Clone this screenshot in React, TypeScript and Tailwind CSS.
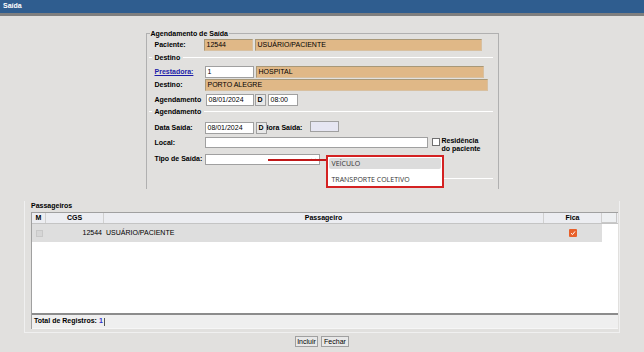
import React from "react";

const BG = "bg-[#e1e0de]";

function Inp({ w, v, tan, h = "h-[12px]", extra = "" }: { w: string; v?: string; tan?: boolean; h?: string; extra?: string }) {
  return (
    <div
      className={`${w} ${h} shrink-0 border ${tan ? "bg-[#e0b887] border-t-[#a89878] border-l-[#a89878] border-r-[#d8c0a0] border-b-[#d8c0a0]" : "bg-white border-[#a0a0a0]"} px-[2px] leading-[10px] text-[7px] whitespace-nowrap overflow-hidden ${extra}`}
    >
      {v}
    </div>
  );
}

function DBtn() {
  return (
    <div className="relative z-10 w-[11px] h-[12px] shrink-0 border border-[#a0a0a0] bg-[#e8e8e8] text-center font-bold leading-[10px] text-[7px]">
      D
    </div>
  );
}

function SubLegend({ t }: { t: string }) {
  return (
    <div className="flex h-[9px] items-center ml-[2px] mr-[5px]">
      <div className="w-[3px] h-px bg-white" />
      <span className="px-[3px] font-bold leading-[9px]">{t}</span>
      <div className="flex-1 h-px bg-white" />
    </div>
  );
}

export default function App() {
  return (
    <div className={`w-[644px] h-[352px] ${BG} font-['Liberation_Sans',Arial,sans-serif] text-[7px] text-black overflow-hidden`}>
      <div className="h-[13px] bg-[#2f5d8f] text-white font-bold px-[3px] leading-[12px] text-[7px]">Saída</div>
      <div className="h-[3px] bg-[#7f7f7f]" />

      {/* Top fieldset */}
      <div className="relative mt-[17px] mx-auto w-[353px] h-[156px] border-t border-l border-r border-[#b0b0b0]">
        <div className={`-mt-[5px] ml-[3px] w-fit px-[1px] ${BG} font-bold h-[9px] leading-[9px]`}>Agendamento de Saída</div>

        <div className="mt-[1px] flex h-[12px] items-center pl-[8px]">
          <span className="w-[49px] font-bold">Paciente:</span>
          <Inp w="w-[49px]" v="12544" tan />
          <Inp w="w-[227px]" v="USUÁRIO/PACIENTE" tan extra="ml-[2px]" />
        </div>

        <div className="mt-[2px]">
          <SubLegend t="Destino" />
        </div>

        <div className="mt-[4px] flex h-[12px] items-center pl-[8px]">
          <span className="w-[50px] font-bold text-[#1c1ca8] underline">Prestadora:</span>
          <Inp w="w-[49px]" v="1" />
          <Inp w="w-[228px]" v="HOSPITAL" tan extra="ml-[2px]" />
        </div>

        <div className="mt-[1px] flex h-[12px] items-center pl-[8px]">
          <span className="w-[50px] font-bold">Destino:</span>
          <Inp w="w-[283px]" v="PORTO ALEGRE" tan />
        </div>

        <div className="mt-[3px] flex h-[12px] items-center pl-[8px]">
          <span className="w-[51px] font-bold">Agendamento</span>
          <Inp w="w-[48px]" v="08/01/2024" />
          <div className="ml-[1px]"><DBtn /></div>
          <Inp w="w-[30px]" v="08:00" extra="ml-[2px]" />
        </div>

        <div className="mt-[1px]">
          <SubLegend t="Agendamento" />
        </div>

        <div className="mt-[6px] flex h-[12px] items-center pl-[8px]">
          <span className="w-[50px] font-bold">Data Saída:</span>
          <Inp w="w-[49px]" v="08/01/2024" />
          <div className="ml-[2px]"><DBtn /></div>
          <span className="-ml-[3px] w-[46px] font-bold whitespace-nowrap">Hora Saída:</span>
          <Inp w="w-[29px]" h="h-[11px]" extra="bg-[#e6e6f2]! self-start -mt-[1px]" />
        </div>

        <div className="mt-[3px] flex h-[11px] items-start pl-[8px]">
          <span className="w-[50px] font-bold leading-[11px]">Local:</span>
          <Inp w="w-[223px]" h="h-[11px]" />
          <div className="ml-[4px] mt-[1px] w-[8px] h-[8px] shrink-0 border border-[#707070] bg-white" />
          <div className="ml-[2px] font-bold leading-[8px]">
            Residência
            <br />
            do paciente
          </div>
        </div>

        <div className="mt-[6px] flex h-[11px] items-center pl-[8px]">
          <span className="w-[50px] font-bold">Tipo de Saída:</span>
          <div className="relative w-[115px] h-[11px] border border-[#a0a0a0] bg-white">
            <svg className="absolute right-[3px] top-[3px]" width="5" height="4" viewBox="0 0 5 4">
              <path d="M0.5 0.8 L2.5 3 L4.5 0.8" fill="none" stroke="#555" strokeWidth="0.8" />
            </svg>
          </div>
        </div>

        <div className="mt-[13px] ml-[253px] mr-[5px] h-px bg-white" />

        {/* overlay: red pointer + dropdown */}
        <div className="absolute left-[121px] top-[125px] w-[59px] h-[2px] bg-[#c01818]" />
        <div className="absolute left-[179px] top-[121px] w-[118px] h-[33px] border-2 border-[#d42222] bg-white px-[1px] pt-[1px] font-['Open_Sans',sans-serif] text-[#333] text-[7px]">
          <div className="h-[11px] rounded-[2px] bg-[#dcdcdc] pl-[3px] leading-[11px]">VEÍCULO</div>
          <div className="mt-[5px] pl-[3px] leading-[11px]">TRANSPORTE COLETIVO</div>
        </div>
      </div>

      {/* Passageiros */}
      <div className="mt-[16px] ml-[24px] w-[596px] border-l border-r border-b border-[#f0f0f0] pb-[3px]">
        <div className="-mt-[4px] ml-[6px] h-[9px] leading-[9px] font-bold">Passageiros</div>
        <div className="mt-[2px] ml-[6px] w-[587px] border-t border-l border-[#a0a0a0]">
          <div className="flex h-[11px] bg-[#ecedf1] border-b border-[#c4c4c4] font-bold leading-[10px]">
            <div className="w-[14px] border-r border-[#d0d0d0] text-center">M</div>
            <div className="w-[58px] border-r border-[#d0d0d0] text-center">CGS</div>
            <div className="w-[440px] border-r border-[#d0d0d0] text-center">Passageiro</div>
            <div className="w-[58px] border-r border-[#d0d0d0] text-center">Fica</div>
            <div className="w-[15px] border-r border-b border-[#c8c8c8] bg-[#eef0f2]" />
          </div>
          <div className="h-[89px] bg-white">
            <div className="flex h-[18px] w-[570px] items-center bg-[#dedede]">
              <div className="w-[14px] flex justify-center">
                <div className="w-[7px] h-[7px] border border-[#c8c8c8] bg-[#d6d6d6]" />
              </div>
              <div className="w-[58px] text-right pr-[2px]">12544</div>
              <div className="w-[440px] pl-[2px]">USUÁRIO/PACIENTE</div>
              <div className="w-[58px] flex justify-center">
                <div className="w-[8px] h-[8px] rounded-[1px] bg-[#e8602a] flex items-center justify-center">
                  <svg width="6" height="6" viewBox="0 0 6 6">
                    <path d="M1 3.2 L2.5 4.6 L5 1.4" fill="none" stroke="white" strokeWidth="1" />
                  </svg>
                </div>
              </div>
            </div>
          </div>
          <div className="h-[2px] bg-[#8c8c8c]" />
          <div className="flex h-[13px] items-center bg-[#efefef] pl-[2px] font-bold">
            <span>Total de Registros:</span>
            <span className="ml-[2px] text-[#3030c8]">1</span>
            <span className="ml-[1px] w-px h-[8px] bg-[#555]" />
          </div>
          <div className="h-px bg-[#f6f6f6]" />
        </div>
      </div>

      <div className="mt-[3px] flex justify-center gap-[3px]">
        <div className="w-[23px] h-[11px] border border-[#a0a0a0] bg-[#e8e8e8] text-center leading-[9px]">Incluir</div>
        <div className="w-[28px] h-[11px] border border-[#a0a0a0] bg-[#e8e8e8] text-center leading-[9px]">Fechar</div>
      </div>
    </div>
  );
}
